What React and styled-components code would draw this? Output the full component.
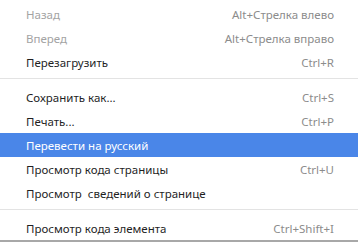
import React from 'react';
import styled, { createGlobalStyle } from 'styled-components';

const GlobalStyle = createGlobalStyle`
  html, body {
    margin: 0;
    padding: 0;
    background: #fff;
  }
  body {
    font-family: "Noto Sans", "Open Sans", sans-serif;
  }
`;

const items = [
  { label: 'Назад', shortcut: 'Alt+Стрелка влево', disabled: true },
  { label: 'Вперед', shortcut: 'Alt+Стрелка вправо', disabled: true },
  { label: 'Перезагрузить', shortcut: 'Ctrl+R' },
  { separator: true },
  { label: 'Сохранить как...', shortcut: 'Ctrl+S' },
  { label: 'Печать...', shortcut: 'Ctrl+P' },
  { label: 'Перевести на русский', active: true },
  { label: 'Просмотр кода страницы', shortcut: 'Ctrl+U' },
  { label: 'Просмотр  сведений о странице' },
  { separator: true },
  { label: 'Просмотр кода элемента', shortcut: 'Ctrl+Shift+I' },
];

const App = () => (
  <>
    <GlobalStyle />
    <Menu>
      {items.map((item, i) =>
        item.separator ? (
          <Separator key={i} />
        ) : (
          <Item key={i} $active={item.active} $disabled={item.disabled}>
            <Label>{item.label}</Label>
            {item.shortcut && <Shortcut $active={item.active}>{item.shortcut}</Shortcut>}
          </Item>
        )
      )}
    </Menu>
  </>
);

export default App;

const Menu = styled.ul`
  list-style: none;
  margin: 0;
  padding: 2px 0 0;
  width: 358px;
  border-bottom: 2px solid #a8a8a8;
  display: flex;
  flex-direction: column;
`;

const Item = styled.li`
  display: flex;
  align-items: center;
  justify-content: space-between;
  height: 24px;
  padding: 0 24px 0 26px;
  font-size: 11.5px;
  white-space: pre;
  color: ${(p) => (p.$active ? '#fff' : p.$disabled ? '#a3a3a3' : '#1f1f1f')};
  background: ${(p) => (p.$active ? '#4a86e8' : 'transparent')};
`;

const Label = styled.span``;

const Shortcut = styled.span`
  color: ${(p) => (p.$active ? '#fff' : '#8c8c8c')};
`;

const Separator = styled.li`
  height: 11px;
  display: flex;
  align-items: flex-start;
  padding-top: 4px;
  box-sizing: border-box;
  &::before {
    content: '';
    flex: 1;
    height: 1px;
    background: #e3e3e3;
  }
`;
